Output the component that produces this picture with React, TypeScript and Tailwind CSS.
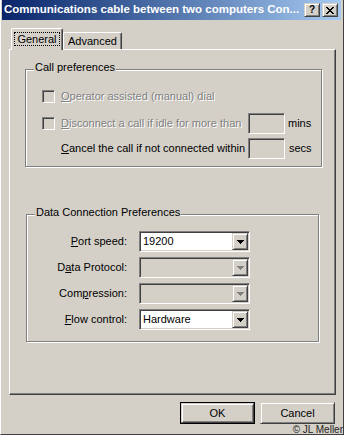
import React from "react";

const raised =
  "border border-[#d4d0c8] border-r-[#404040] border-b-[#404040] shadow-[inset_1px_1px_0_#fff,inset_-1px_-1px_0_#808080]";
const sunken =
  "border border-[#808080] border-r-white border-b-white shadow-[inset_1px_1px_0_#404040,inset_-1px_-1px_0_#d4d0c8]";
const etched = "relative border border-[#808080] shadow-[inset_1px_1px_0_#fff,1px_1px_0_#fff]";
const disabledText = "text-[#808080] [text-shadow:1px_1px_0_#fff]";

const Arrow = ({ disabled }: { disabled?: boolean }) => (
  <svg width="7" height="4" viewBox="0 0 7 4" shapeRendering="crispEdges">
    <g fill={disabled ? "#808080" : "#000"}>
      <rect x="0" y="0" width="7" height="1" />
      <rect x="1" y="1" width="5" height="1" />
      <rect x="2" y="2" width="3" height="1" />
      <rect x="3" y="3" width="1" height="1" />
    </g>
  </svg>
);

const Combo = ({ value, disabled }: { value?: string; disabled?: boolean }) => (
  <div className={`flex h-[21px] w-[111px] items-center ${sunken} ${disabled ? "bg-[#d4d0c8]" : "bg-white"}`}>
    <span className="flex-1 pl-[3px] leading-none">{value}</span>
    <div className={`mr-[1px] flex h-[17px] w-[16px] items-center justify-center bg-[#d4d0c8] ${raised}`}>
      <Arrow disabled={disabled} />
    </div>
  </div>
);

const Check = () => <div className={`h-[13px] w-[13px] bg-[#d4d0c8] ${sunken}`} />;

const GroupLabel = ({ text }: { text: string }) => (
  <span className="absolute left-[8px] top-[-8px] bg-[#d4d0c8] px-[1px] leading-none text-black">{text}</span>
);

export default function App() {
  return (
    <div className="relative flex h-[435px] w-[344px] flex-col overflow-hidden border-l border-l-white border-r border-r-[#404040] border-b border-b-[#404040] bg-[#d4d0c8] pl-[1px] pr-[2px] font-['Liberation_Sans',Arial,sans-serif] text-[11px] text-black">
      {/* title bar */}
      <div className="flex h-[20px] items-center bg-gradient-to-r from-[#0a246a] to-[#a6caf0] pl-[2px] pr-[3px]">
        <span className="flex-1 overflow-hidden whitespace-nowrap text-[11.5px] font-bold text-white">
          Communications cable between two computers Con...
        </span>
        <div className={`flex h-[14px] w-[16px] items-center justify-center bg-[#d4d0c8] ${raised}`}>
          <span className="text-[10px] font-bold leading-none">?</span>
        </div>
        <div className={`ml-[2px] flex h-[14px] w-[16px] items-center justify-center bg-[#d4d0c8] ${raised}`}>
          <svg width="8" height="7" viewBox="0 0 8 7" shapeRendering="crispEdges">
            <path d="M0 0h2v1h-2zM6 0h2v1h-2zM1 1h2v1h-2zM5 1h2v1h-2zM2 2h4v1h-4zM3 3h2v1h-2zM2 4h4v1h-4zM1 5h2v1h-2zM5 5h2v1h-2zM0 6h2v1h-2zM6 6h2v1h-2z" fill="#000" />
          </svg>
        </div>
      </div>

      {/* tabs */}
      <div className="ml-[9px] mt-[8px] flex h-[21px] items-end">
        <div className="relative z-10 -mb-[1px] flex h-[22px] w-[52px] items-start justify-center rounded-t-[2px] border-l border-t border-l-white border-t-white border-r border-r-[#404040] bg-[#d4d0c8] pt-[3px] shadow-[inset_-1px_0_0_#808080]">
          <span className="border border-dotted border-black px-[2px] leading-[12px]">General</span>
        </div>
        <div className="flex h-[17px] w-[59px] items-start justify-center rounded-t-[2px] border-l border-t border-l-white border-t-white border-r border-r-[#404040] pt-[2px] shadow-[inset_-1px_0_0_#808080]">
          <span className="leading-[12px]">Advanced</span>
        </div>
      </div>

      {/* panel */}
      <div className="ml-[7px] flex h-[346px] w-[327px] flex-col border-l border-t border-l-white border-t-white border-r border-b border-r-[#404040] border-b-[#404040] shadow-[inset_-1px_-1px_0_#808080]">
        <div className={`ml-[15px] mt-[19px] h-[98px] w-[297px] ${etched}`}>
          <GroupLabel text="Call preferences" />
          <div className="flex flex-col pt-[16px]">
            <div className="flex h-[21px] items-center pl-[16px]">
              <Check />
              <span className={`ml-[6px] ${disabledText}`}>
                <u>O</u>perator assisted (manual) dial
              </span>
            </div>
            <div className="mt-[6px] flex h-[21px] items-center pl-[16px]">
              <Check />
              <span className={`ml-[6px] w-[187px] ${disabledText}`}>
                <u>D</u>isconnect a call if idle for more than
              </span>
              <div className={`h-[21px] w-[37px] ${sunken}`} />
              <span className="ml-[3px]">mins</span>
            </div>
            <div className="mt-[4px] flex h-[21px] items-center pl-[35px]">
              <span className="w-[187px]">
                <u>C</u>ancel the call if not connected within
              </span>
              <div className={`h-[21px] w-[37px] ${sunken}`} />
              <span className="ml-[4px]">secs</span>
            </div>
          </div>
        </div>

        <div className={`ml-[16px] mt-[47px] h-[128px] w-[293px] ${etched}`}>
          <GroupLabel text="Data Connection Preferences" />
          <div className="grid grid-cols-[100px_111px] items-center gap-x-[12px] gap-y-[5px] pt-[16px]">
            <span className="text-right">
              <u>P</u>ort speed:
            </span>
            <Combo value="19200" />
            <span className="text-right">
              D<u>a</u>ta Protocol:
            </span>
            <Combo disabled />
            <span className="text-right">
              Com<u>p</u>ression:
            </span>
            <Combo disabled />
            <span className="text-right">
              <u>F</u>low control:
            </span>
            <Combo value="Hardware" />
          </div>
        </div>
      </div>

      {/* buttons */}
      <div className="mt-[7px] flex justify-end gap-[5px] pr-[6px]">
        <div className="border border-black">
          <div className={`flex h-[20px] w-[73px] items-center justify-center ${raised}`}>OK</div>
        </div>
        <div className={`flex h-[22px] w-[75px] items-center justify-center ${raised}`}>Cancel</div>
      </div>

      <span className="absolute bottom-[-1px] right-0 text-[10px] leading-[11px] text-[#222]">© JL Meller</span>
    </div>
  );
}
